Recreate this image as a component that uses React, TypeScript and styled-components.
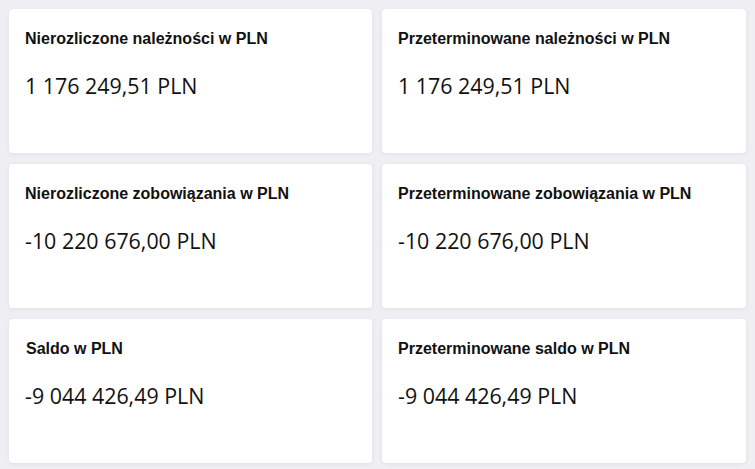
import React from "react";
import styled, { createGlobalStyle } from "styled-components";

const Global = createGlobalStyle`
  html, body { margin: 0; padding: 0; background: #efeff3; }
  body { font-family: "Liberation Sans", Arial, sans-serif; }
`;

const Grid = styled.div`
  display: grid;
  grid-template-columns: 363px 364px;
  grid-auto-rows: 144px;
  column-gap: 10px;
  row-gap: 11px;
  padding: 9px;
`;

const Card = styled.div`
  background: #ffffff;
  border-radius: 4px;
  box-shadow: 0 1px 4px rgba(40, 40, 80, 0.08);
  padding: 21px 16px 0 16px;
  box-sizing: border-box;
`;

const Title = styled.div<{ $shift?: number }>`
  font-family: "Liberation Sans", Arial, sans-serif;
  font-weight: 700;
  font-size: 16px;
  line-height: 18px;
  color: #111;
  padding-left: ${(p) => p.$shift ?? 0}px;
`;

const Value = styled.div`
  font-family: "Open Sans", "Noto Sans", sans-serif;
  font-size: 21.4px;
  line-height: 28px;
  color: #111;
  margin-top: 24px;
`;

const items = [
  { t: "Nierozliczone należności w PLN", v: "1 176 249,51 PLN" },
  { t: "Przeterminowane należności w PLN", v: "1 176 249,51 PLN" },
  { t: "Nierozliczone zobowiązania w PLN", v: "-10 220 676,00 PLN" },
  { t: "Przeterminowane zobowiązania w PLN", v: "-10 220 676,00 PLN" },
  { t: "Saldo w PLN", v: "-9 044 426,49 PLN", s: 1 },
  { t: "Przeterminowane saldo w PLN", v: "-9 044 426,49 PLN" },
];

export default function App() {
  return (
    <>
      <Global />
      <Grid>
        {items.map((it, i) => (
          <Card key={i}>
            <Title $shift={it.s}>{it.t}</Title>
            <Value>{it.v}</Value>
          </Card>
        ))}
      </Grid>
    </>
  );
}
